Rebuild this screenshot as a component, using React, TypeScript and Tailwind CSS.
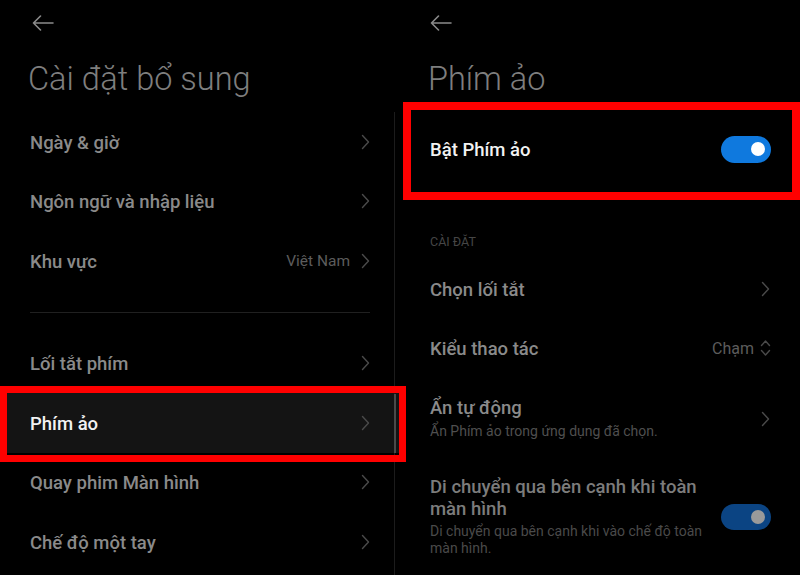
import React from "react";

const font = { fontFamily: "Roboto, 'Noto Sans', sans-serif" };

function Back() {
  return (
    <svg width="22" height="16" viewBox="0 0 22 16" fill="none" stroke="#8a8a8a" strokeWidth="1.6" strokeLinecap="round" strokeLinejoin="round">
      <path d="M21 8H1.5M8.5 1L1.5 8l7 7" />
    </svg>
  );
}

function Chevron({ color = "#4a4a4a" }: { color?: string }) {
  return (
    <svg width="9" height="16" viewBox="0 0 9 16" fill="none" stroke={color} strokeWidth="1.4" strokeLinecap="round" strokeLinejoin="round">
      <path d="M1.5 1.5L7.5 8l-6 6.5" />
    </svg>
  );
}

function UpDown() {
  return (
    <svg width="11" height="18" viewBox="0 0 11 18" fill="none" stroke="#4a4a4a" strokeWidth="1.4" strokeLinecap="round" strokeLinejoin="round">
      <path d="M1.5 6.5L5.5 2l4 4.5M1.5 11.5l4 4.5 4-4.5" />
    </svg>
  );
}

function Row({ label, value, active }: { label: string; value?: string; active?: boolean }) {
  return (
    <div className={`flex h-[59.5px] items-center pl-[30px] pr-[30px] ${active ? "bg-[#141414]" : ""}`}>
      <span className={`flex-1 pt-[4px] text-[18.5px] font-medium ${active ? "text-[#f2f2f2]" : "text-[#8a8a8a]"}`}>{label}</span>
      {value && <span className="mr-[11px] pt-[2px] text-[15.5px] text-[#5c5c5c]">{value}</span>}
      <Chevron />
    </div>
  );
}

export default function App() {
  return (
    <div className="flex h-[575px] w-[800px] overflow-hidden bg-black relative" style={font}>
      {/* Left panel */}
      <div className="relative w-[400px] shrink-0">
        <div className="h-[112px] pl-[32px]">
          <div className="flex h-[46px] items-center">
            <Back />
          </div>
          <div className="-ml-[4px] mt-[13px] text-[32.5px] font-light leading-[40px] text-[#7e7e7e]">Cài đặt bổ sung</div>
        </div>
        <Row label="Ngày & giờ" />
        <Row label="Ngôn ngữ và nhập liệu" />
        <Row label="Khu vực" value="Việt Nam" />
        <div className="py-[21px] pl-[30px] pr-[30px]">
          <div className="h-px bg-[#202020]" />
        </div>
        <Row label="Lối tắt phím" />
        <Row label="Phím ảo" active />
        <Row label="Quay phim Màn hình" />
        <Row label="Chế độ một tay" />
        {/* scrollbar */}
        <div className="absolute left-[394px] top-[112px] bottom-0 w-px bg-[#1c1c1c]" />
        <div className="absolute left-[394px] top-[394px] h-[59px] w-[2px] bg-[#4a4a4a]" />
      </div>

      {/* Right panel */}
      <div className="w-[400px] shrink-0">
        <div className="h-[112px] pl-[30px]">
          <div className="flex h-[46px] items-center">
            <Back />
          </div>
          <div className="-ml-[2px] mt-[13px] text-[32.5px] font-light leading-[40px] text-[#7e7e7e]">Phím ảo</div>
        </div>
        <div className="flex h-[74px] items-center pl-[30px] pr-[29px]">
          <span className="flex-1 pt-[4px] text-[18.5px] font-medium text-[#f2f2f2]">Bật Phím ảo</span>
          <div className="flex h-[27px] w-[50px] items-center justify-end rounded-full bg-[#0f79de] pr-[6px]">
            <div className="h-[14px] w-[14px] rounded-full bg-white" />
          </div>
        </div>
        <div className="pl-[30px] pt-[48px] text-[12.5px] leading-[16px] text-[#464646]">CÀI ĐẶT</div>
        <div className="h-[9.5px]" />
        <div className="flex h-[59px] items-center pl-[30px] pr-[30px]">
          <span className="flex-1 pt-[4px] text-[18.5px] font-medium text-[#8a8a8a]">Chọn lối tắt</span>
          <Chevron />
        </div>
        <div className="flex h-[59px] items-center pl-[30px] pr-[29px]">
          <span className="flex-1 pt-[4px] text-[18.5px] font-medium text-[#8a8a8a]">Kiểu thao tác</span>
          <span className="mr-[6px] pt-[2px] text-[16px] text-[#5c5c5c]">Chạm</span>
          <UpDown />
        </div>
        <div className="flex items-center pl-[30px] pr-[30px] pt-[18.5px] pb-[17px]">
          <div className="flex-1">
            <div className="text-[18.5px] font-medium leading-[24px] text-[#8a8a8a]">Ẩn tự động</div>
            <div className="mt-[1px] text-[14px] leading-[20px] text-[#4f4f4f]">Ẩn Phím ảo trong ứng dụng đã chọn.</div>
          </div>
          <Chevron />
        </div>
        <div className="flex items-center pl-[30px] pr-[29px] pt-[18px]">
          <div className="w-[285px]">
            <div className="text-[18.5px] font-medium leading-[22px] text-[#7c7c7c]">Di chuyển qua bên cạnh khi toàn màn hình</div>
            <div className="mt-[3px] text-[14px] leading-[17px] text-[#4a4a4a]">Di chuyển qua bên cạnh khi vào chế độ toàn màn hình.</div>
          </div>
          <div className="flex-1" />
          <div className="flex h-[26px] w-[50px] items-center justify-end rounded-full bg-[#0b4483] pr-[6px]">
            <div className="h-[14px] w-[14px] rounded-full bg-[#9a9a9a]" />
          </div>
        </div>
      </div>

      {/* Annotation boxes */}
      <div className="pointer-events-none absolute left-0 top-[386px] h-[76px] w-[406px] border-[7px] border-[#ff0000]" />
      <div className="pointer-events-none absolute left-[403px] top-[102px] h-[98px] w-[397px] border-[8px] border-[#ff0000]" />
    </div>
  );
}
